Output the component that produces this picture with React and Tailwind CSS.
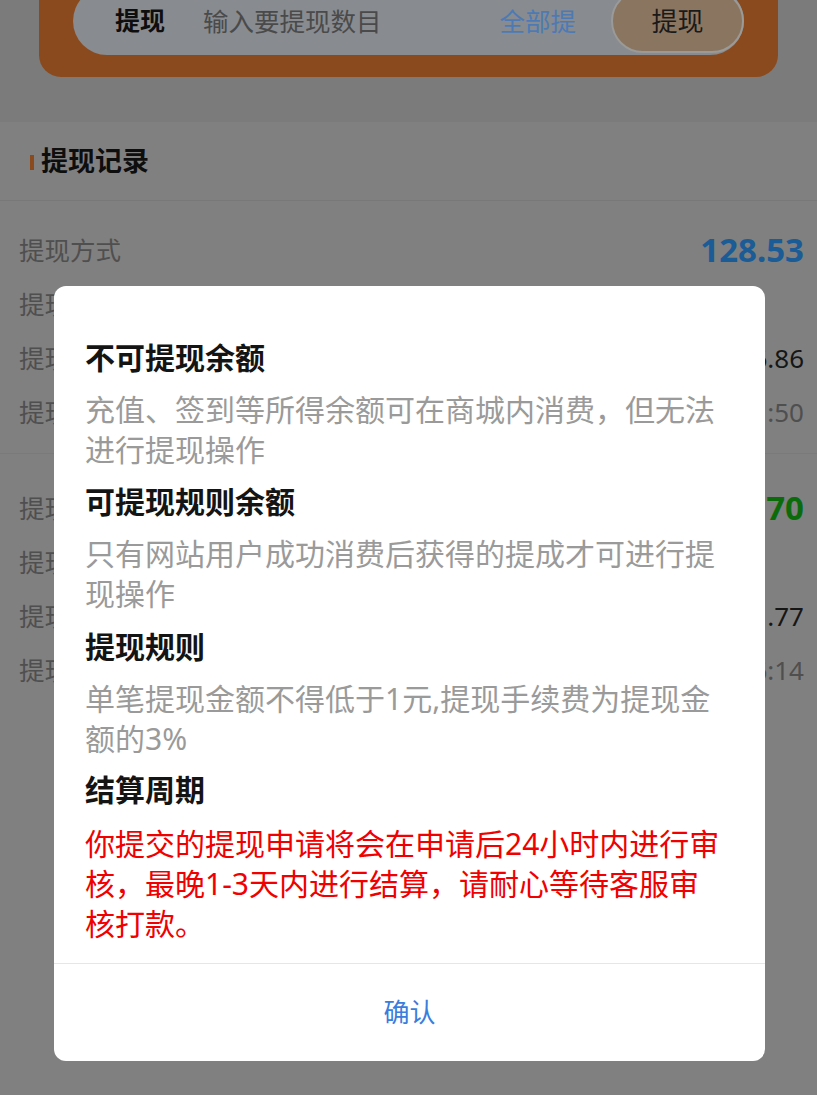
import { useState } from "react";

const rowsA = [
  { label: "提现方式", value: "128.53", cls: "text-[33px] font-bold text-[#1b5b96]" },
  { label: "提现账号", value: "", cls: "" },
  { label: "提现金额", value: "126.86", cls: "text-[26px] text-[#161616]" },
  { label: "提现时间", value: "2023-08-12 10:21:50", cls: "text-[26px] text-[#4f4f4f]" },
];

const rowsB = [
  { label: "提现方式", value: "52.70", cls: "text-[33px] font-bold text-[#0b6b0b]" },
  { label: "提现账号", value: "", cls: "" },
  { label: "提现金额", value: "51.77", cls: "text-[26px] text-[#161616]" },
  { label: "提现时间", value: "2023-07-30 18:06:14", cls: "text-[26px] text-[#4f4f4f]" },
];

function RecordGroup({ rows }) {
  return (
    <div>
      {rows.map((r, i) => (
        <div key={i} className="h-[54px] flex items-center justify-between">
          <span className="text-[25.5px] text-[#4f4f4f]">{r.label}</span>
          <span className={r.cls}>{r.value}</span>
        </div>
      ))}
    </div>
  );
}

export default function App() {
  const [open, setOpen] = useState(true);

  return (
    <div
      className="relative w-[817px] h-[1095px] overflow-hidden bg-[#7b7b7b] flex flex-col"
      style={{ fontFamily: '"Noto Sans", "Noto Sans CJK SC", sans-serif' }}
    >
      {/* withdraw bar */}
      <div className="h-[122px] flex flex-col shrink-0">
        <div className="-mt-[40px] mx-[39px] rounded-[22px] bg-[#8a4a1d] px-[34px] pt-[27px] pb-[22px]">
          <div className="h-[68px] rounded-full bg-[#888b8f] flex items-center pl-[42px]">
            <span className="text-[25px] font-bold text-[#0e0e0e]">提现</span>
            <span className="ml-[38px] text-[25.5px] text-[#4a4a4a] flex-1">输入要提现数目</span>
            <span className="text-[25.5px] text-[#4d7ab5] mr-[35px]">全部提</span>
            <div className="h-[64px] w-[133px] rounded-full bg-[#8a7560] border-[2px] border-[#9a9a98] flex items-center justify-center">
              <span className="text-[26px] text-[#1a1a1a]">提现</span>
            </div>
          </div>
        </div>
      </div>

      {/* records */}
      <div className="bg-[#808080] flex-1">
        <div className="h-[79px] flex items-center pl-[30px] border-b border-[#787878]">
          <span className="w-[4px] h-[15px] bg-[#8a4a1d] mr-[7px] mt-[2px]" />
          <span className="text-[27px] font-bold text-[#0e0e0e]">提现记录</span>
        </div>
        <div className="pl-[19px] pr-[13px] pt-[22px] pb-[14px] border-b border-[#7a7a7a]">
          <RecordGroup rows={rowsA} />
        </div>
        <div className="pl-[19px] pr-[13px] pt-[27px] pb-[20px]">
          <RecordGroup rows={rowsB} />
        </div>
      </div>

      {/* rules dialog */}
      {open && (
        <div className="absolute left-[54px] top-[286px] w-[711px] bg-white rounded-[12px] overflow-hidden">
          <div className="pt-[52px] pb-[19px] pl-[31px] pr-[40px] text-[30px] leading-[40px]">
            <h3 className="font-bold text-[#141414]">不可提现余额</h3>
            <p className="mt-[12px] text-[#9a9a9a]">充值、签到等所得余额可在商城内消费，但无法进行提现操作</p>
            <h3 className="mt-[12px] font-bold text-[#141414]">可提现规则余额</h3>
            <p className="mt-[12px] text-[#9a9a9a]">只有网站用户成功消费后获得的提成才可进行提现操作</p>
            <h3 className="mt-[13px] font-bold text-[#141414]">提现规则</h3>
            <p className="mt-[12px] text-[#9a9a9a]">单笔提现金额不得低于1元,提现手续费为提现金额的3%</p>
            <h3 className="mt-[11px] font-bold text-[#141414]">结算周期</h3>
            <p className="mt-[14px] text-[#f00000]">
              你提交的提现申请将会在申请后24小时内进行审核，最晚1-3天内进行结算，请耐心等待客服审核打款。
            </p>
          </div>
          <button
            onClick={() => setOpen(false)}
            className="w-full h-[98px] border-t border-[#e6e6e6] text-[26px] text-[#3a7ddc] flex items-center justify-center"
          >
            确认
          </button>
        </div>
      )}
    </div>
  );
}
